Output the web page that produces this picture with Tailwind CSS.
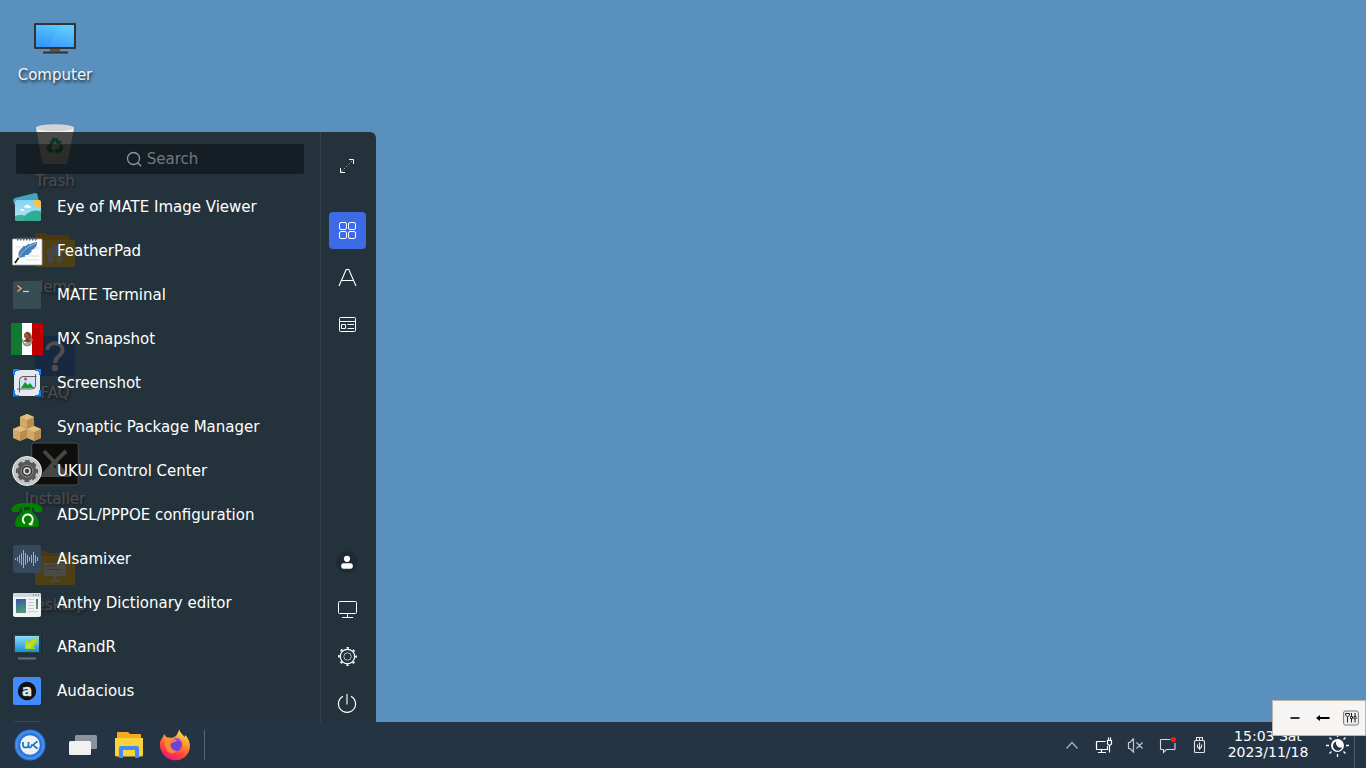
<!DOCTYPE html>
<html lang="en">
<head>
<meta charset="utf-8">
<title>Desktop</title>
<script src="https://cdn.jsdelivr.net/npm/@tailwindcss/browser@4"></script>
</head>
<body class="relative flex h-[768px] w-[1366px] flex-col overflow-hidden bg-[#5990bd] font-['DejaVu_Sans',sans-serif] text-[15px] text-white">

<!-- Desktop icons -->
<div class="absolute left-0 top-0 flex w-[110px] flex-col text-center text-[#f4f4f4] [text-shadow:1px_2px_3px_rgba(0,0,0,.75)]">
  <div class="flex h-[106px] flex-col items-center pt-[14px]"><svg class="h-12 w-12 shrink-0" viewBox="0 0 48 48"><defs><linearGradient id="scr" x1=".7" y1="0" x2=".3" y2="1"><stop stop-color="#58ccfd"/><stop offset="1" stop-color="#3496f7"/></linearGradient></defs><rect x="3" y="9" width="42" height="26" rx="1.2" fill="#333"/><path d="M5 11h38v22H5z" fill="url(#scr)"/><path d="M30 11h13v22H17z" fill="#fff" opacity=".05"/><path d="M19 35h10v2.500H19z" fill="#555"/><path d="M12 37.500h25v2H12z" fill="#333"/></svg><span class="mt-[3px] leading-5">Computer</span></div>
  <div class="flex h-[106px] flex-col items-center pt-[14px]"><svg class="h-12 w-12 shrink-0" viewBox="0 0 48 48"><path d="M5 7.500l6 33.500q.5 3 3 3h20q2.500 0 3-3l6-33.500z" fill="#f0f0f0"/><ellipse cx="24" cy="7.700" rx="19" ry="3.500" fill="#d2d4d6"/><g fill="none" stroke="#00a05a" stroke-width="3.600"><path d="M20 24l2.500-4.200h3l2 3.400"/><path d="M29 25l1.500 3-1.500 2.800h-4"/><path d="M22 30.800h-3L17.500 28l1.500-3"/></g><path d="M25.500 23.800l4.500.2 1-4zM26 28l-3 2.800 3 2.700zM16 25.500l4.300-1.800.8 4.300z" fill="#00a05a"/></svg><span class="mt-[3px] leading-5">Trash</span></div>
  <div class="flex h-[106px] flex-col items-center pt-[14px]"><svg class="h-12 w-12 shrink-0" viewBox="0 0 48 48"><path d="M4 9q0-2 2-2h9l3 2h18q2 0 2 2v8H4z" fill="#ff9f0a"/><rect x="4" y="14" width="40" height="27" rx="2" fill="#ffc824"/><path d="M24 18l-10 9h3v10h5v-7h4v7h5V27h3z" fill="#e6e0e8"/></svg><span class="mt-[3px] leading-5">demo</span></div>
  <div class="flex h-[106px] flex-col items-center pt-[14px]"><svg class="h-12 w-12 shrink-0" viewBox="0 0 48 48"><rect x="4" y="4" width="40" height="40" rx="3" fill="#2a68d0"/><path d="M16.500 18c0-9 15-9 15 0 0 6-7.500 6-7.500 13" fill="none" stroke="#fff" stroke-width="4"/><circle cx="24" cy="36" r="3.200" fill="#fff"/></svg><span class="mt-[3px] leading-5">FAQ</span></div>
  <div class="flex h-[106px] flex-col items-center pt-[14px]"><svg class="h-12 w-12 shrink-0" viewBox="0 0 48 48"><rect x=".7" y="5" width="46.600" height="42" rx="2.500" fill="#000" stroke="#eee"/><path d="M8 39l12-14 4 5 4-4 12 13z" fill="#ddd"/><path d="M13 13l17 18M35 13L21 27" stroke="#ddd" stroke-width="4"/></svg><span class="mt-[3px] leading-5">Installer</span></div>
  <div class="flex h-[106px] flex-col items-center pt-[14px]"><svg class="h-12 w-12 shrink-0" viewBox="0 0 48 48"><path d="M4 9q0-2 2-2h9l3 2h18q2 0 2 2v8H4z" fill="#ff9f0a"/><rect x="4" y="12" width="40" height="29" rx="2" fill="#ffc824"/><path d="M13 19h22v13H13z" fill="#f0f0f0"/><path d="M24 32v4M19 37h10" stroke="#f0f0f0" stroke-width="1.500"/><path d="M15 22h10M15 25.500h14" stroke="#a98"/></svg><span class="mt-[3px] leading-5">Desktop</span></div>
</div>

<!-- Start menu -->
<main class="relative flex h-[722px] shrink-0 items-end">
<section class="flex h-[590px] w-[376px] overflow-hidden rounded-tr-md bg-[#131312]/75">
  <div class="w-[321px] shrink-0 border-r border-[#35424c]">
    <div class="ml-4 mt-3 flex h-[30px] w-[288px] items-center justify-center gap-1 rounded-[2px] bg-black/40 pl-[3px] text-[#73797e]">
      <svg class="h-[18px] w-[18px]" viewBox="0 0 18 18" fill="none" stroke="#91969a" stroke-width="1.300"><circle cx="8.500" cy="8.500" r="6"/><path d="M13 13l3.200 3.200"/></svg><span class="leading-5">Search</span>
    </div>
    <ul class="mt-[11px] [&>li]:flex [&>li]:h-11 [&>li]:items-center [&>li]:gap-[14px] [&>li]:whitespace-nowrap [&>li]:pl-[11px] [&_svg]:h-8 [&_svg]:w-8 [&_svg]:shrink-0">
      <li><svg viewBox="0 0 32 32"><path d="M2 9.500q-.2-2 2-2.500l19-4.800q3-.7 3.500 1.600l4 18H7z" fill="#45a3c0"/><defs><linearGradient id="sky" x2="0" y2="1"><stop stop-color="#83d4f3"/><stop offset="1" stop-color="#b7e5f2"/></linearGradient><clipPath id="card"><rect x="4" y="9" width="26" height="21" rx="2.500"/></clipPath></defs><g clip-path="url(#card)"><path d="M4 9h26v21H4z" fill="url(#sky)"/><circle cx="28.500" cy="10.500" r="6" fill="#f7c34b"/><ellipse cx="10" cy="30" rx="11" ry="6" fill="#3ab095"/><ellipse cx="25" cy="29" rx="12" ry="9.500" fill="#2fad91"/></g><path d="M12.500 16q1-1.500 2-1 2-3 4 0 2 0 1.500 1.500-3 1.500-7.500-.5zM9 19q1-1.500 2.500-1 2 0 2 1.500-2 1-4.500-.5z" fill="#fff"/></svg><span>Eye of MATE Image Viewer</span></li>
      <li><svg viewBox="0 0 32 32"><rect x="1.500" y="4" width="29.500" height="26" rx=".7" fill="#fcfcfc" stroke="#aaa" stroke-width=".8"/><path d="M7.500 2l-1 3.500M10.500 2l-1 3.500M13.500 2l-1 3.500M16.500 2l-1 3.500M19.500 2l-1 3.500M22.500 2l-1 3.500M25.500 2l-1 3.500" stroke="#555" stroke-width="1.200"/><path d="M5 12h6M17 21h11M15 25h13M25 13h3" stroke="#ddd"/><path d="M26 7q1 3-3 7l-3 1 1 1-4 4-3 0 .5 1.500-6.500 1.500q-2-6 3-10l2-2.500 1 1 4-3 .5 1 3-1.500z" fill="#4380bb"/><path d="M25 8Q12 13 7 24" fill="none" stroke="#b8d2ea" stroke-width=".7"/><path d="M7.500 23L4 28" stroke="#111" stroke-width="1.700"/></svg><span>FeatherPad</span></li>
      <li><svg viewBox="0 0 32 32"><rect x="2" y="2" width="28" height="28" rx="2.500" fill="#384c54"/><path d="M6.500 6.500L10 9.500l-3.500 3" fill="none" stroke="#f79a5e" stroke-width="1.600"/><path d="M12 12.500h6" stroke="#c9e488" stroke-width="1.200"/></svg><span>MATE Terminal</span></li>
      <li><svg viewBox="0 0 32 32"><path d="M0 0h11v32H0z" fill="#117a31"/><path d="M11 0h10v32H11z" fill="#fff"/><path d="M21 0h11v32H21z" fill="#c00000"/><path d="M11.500 16c0 9 9 9 9.500 0" fill="none" stroke="#7d9c76" stroke-width="1.500"/><path d="M13 11q2-3 5-2 3 2 3 6-1 4-3 4.500-3 1-5-1.500l2-2-2-2z" fill="#97593c"/><path d="M16 9.500l3 4-3 3 2 3M12.500 18.500l4-2 3 2.500" fill="none" stroke="#5b3322" stroke-width="1"/><path d="M13 21h6" stroke="#5a9a90" stroke-width="1.400"/></svg><span>MX Snapshot</span></li>
      <li><svg viewBox="0 0 32 32"><rect x="3" y="3" width="26" height="26" rx="2" fill="#e5e8ec"/><path d="M2 2h6v2H5v1H4v3H2zM24 2h6v6h-2V5h-1V4h-3zM30 29.500h-6V28h3v-1h1v-4h2zM2 29.500V23h2v4h1v1h3v1.500z" fill="#0a84ff"/><rect x="8.500" y="9" width="15.500" height="13" rx="3" fill="#cfe2fc"/><path d="M24.500 7v12q0 3-4 3H6M25.500 9.500H12q-3.500 0-3.500 4v12" fill="none" stroke="#555f66"/><path d="M10 21l4-6 3 3 2-2 4 5z" fill="#169b22"/><path d="M14.500 10.500v3M13 12h3" stroke="#dc4932" stroke-width="1.600"/></svg><span>Screenshot</span></li>
      <li><svg viewBox="0 0 32 32"><path d="M16 3l7 3v9l-7 3-7-3V6z" fill="#d3a767"/><path d="M16 9l7-3v9l-7 3z" fill="#b98d50"/><path d="M16 3l7 3-7 3-7-3z" fill="#e2bd82"/><path d="M9 15l7 3v9l-7 3-7-3v-9z" fill="#d3a767"/><path d="M9 21l7-3v9l-7 3z" fill="#b98d50"/><path d="M9 15l7 3-7 3-7-3z" fill="#e2bd82"/><path d="M23 15l7 3v9l-7 3-7-3v-9z" fill="#d3a767"/><path d="M23 21l7-3v9l-7 3z" fill="#b98d50"/><path d="M23 15l7 3-7 3-7-3z" fill="#e2bd82"/></svg><span>Synaptic Package Manager</span></li>
      <li><svg viewBox="0 0 32 32"><circle cx="16" cy="16" r="14.500" fill="#c3c5c6" stroke="#f0f0f0" stroke-width="1"/><circle cx="16" cy="16" r="9.400" fill="#58595a"/><circle cx="16" cy="16" r="9.800" fill="none" stroke="#58595a" stroke-width="2.600" stroke-dasharray="4.700 3" stroke-dashoffset="2.350"/><circle cx="16" cy="16" r="5.800" fill="#353535" stroke="#999" stroke-width=".8"/><circle cx="16" cy="16" r="3" fill="#444" stroke="#ddd" stroke-width="1.500"/></svg><span>UKUI Control Center</span></li>
      <li><svg viewBox="0 0 32 32"><path d="M.5 11C0 6 7 4 16 4s16 2 15.500 7q-.2 2.500-2 2h-5q-2-.5-1.500-4-7-2-14 0 .5 3.500-1.500 4h-5q-1.800.5-2-2z" fill="#008200"/><path d="M11 8h2v3h6V8h2v5q6 4 7 11 0 4-2 4H6q-2 0-2-4 1-7 7-11z" fill="#008200"/><path d="M13.800 24.500a5 5 0 1 1 4.200.8h3.500" fill="none" stroke="#f4fff4" stroke-width="2"/></svg><span>ADSL/PPPOE configuration</span></li>
      <li><svg viewBox="0 0 32 32"><rect x="2" y="2" width="28" height="28" rx="2.500" fill="#34495e"/><path d="M4.500 15v2M6.500 14v4M8.500 12v8M10.500 10v12M12.500 7v18M14.500 10v12M16.500 12v8M18.500 14v4M20.500 12v8M22.500 9v14M24.500 12v8M26.500 14v4" stroke="#5cc8f0" stroke-width="1"/></svg><span>Alsamixer</span></li>
      <li><svg viewBox="0 0 32 32"><defs><linearGradient id="pic" x1=".2" x2=".7" y2="1"><stop stop-color="#385da5"/><stop offset="1" stop-color="#5aaa66"/></linearGradient></defs><rect x="2" y="6" width="28" height="24" rx="2" fill="#f1f2f2"/><path d="M4 6h24q2 0 2 2v2H2V8q0-2 2-2z" fill="#d0d8df"/><path d="M22 8h1M24.500 8h1M27 8h1" stroke="#476179"/><path d="M5 12h10v14H5zM25 12h2v10h-2z" fill="url(#pic)"/><path d="M17 12.500h6M17 15.500h6M17 18.500h6M17 21.500h6M17 24.500h10" stroke="#c9ced0"/></svg><span>Anthy Dictionary editor</span></li>
      <li><svg viewBox="0 0 32 32"><defs><linearGradient id="rand" x2="0" y2="1"><stop stop-color="#8cdcff"/><stop offset="1" stop-color="#188dd0"/></linearGradient></defs><rect x="1.500" y="2.500" width="29" height="20.500" rx="1" fill="#2b3c45" stroke="#1d292f"/><path d="M4 5h24v16H4z" fill="url(#rand)"/><path d="M26.500 6v5l-4 4.500 2 2.500H14V8l3.500 2.500z" fill="#a8d51e"/><path d="M26.500 6l-9 7-2-2v6h5.500l-1.500-1.500z" fill="#bfe02c"/><path d="M7 27.500h18" stroke="#63727a" stroke-width="2"/></svg><span>ARandR</span></li>
      <li><svg viewBox="0 0 32 32"><rect x="2" y="2" width="28" height="28" rx="2.500" fill="#448aff"/><circle cx="16" cy="16" r="9.200" fill="#111"/><text x="16" y="21" text-anchor="middle" font-family="DejaVu Sans" font-weight="bold" font-size="15" fill="#dfe6e6" stroke="#dfe6e6" stroke-width=".4">a</text></svg><span>Audacious</span></li>
      <li><svg viewBox="0 0 32 32"><rect x="2" y="2" width="28" height="28" rx="2" fill="#3e4649"/></svg></li>
    </ul>
  </div>
  <nav class="flex w-[55px] flex-col items-start pl-2 pt-[15px] [&>div]:flex [&>div]:h-[37px] [&>div]:w-[37px] [&>div]:shrink-0 [&>div]:pl-[7px] [&>div]:pt-[7px] [&_svg]:h-6 [&_svg]:w-6">
    <div><svg viewBox="0 0 24 24" fill="none" stroke="#fff"><path d="M13 5.500h4.500V10M4.500 14v4.500H9"/><path d="M5.500 17.500l11-11" stroke-dasharray="1.200 2.200" stroke="#bbc1c5"/></svg></div>
    <div class="mt-7 rounded-[4px] bg-[#3d6be5]"><svg viewBox="0 0 24 24" fill="none" stroke="#fff"><rect x="3.500" y="3.500" width="7" height="7" rx="1.500"/><rect x="12.500" y="3.500" width="7" height="7" rx="1.500"/><rect x="3.500" y="12.500" width="7" height="7" rx="1.500"/><rect x="12.500" y="12.500" width="7" height="7" rx="1.500"/></svg></div>
    <div class="mt-[10px]"><svg viewBox="0 0 24 24" fill="none" stroke="#fff" stroke-width="1.100"><path d="M3 20L10.200 3.500h2.600L20 20M6 14.500h11"/></svg></div>
    <div class="mt-[10px]"><svg viewBox="0 0 24 24" fill="none" stroke="#fff"><rect x="3.500" y="4.500" width="16" height="14" rx="1"/><path d="M3.500 8.500h16M5.500 11.500h4v4h-4zM11.500 11.500h6.500M11.500 15.500h6.500"/></svg></div>
    <div class="mt-[201px]"><svg viewBox="0 0 24 24"><circle cx="11" cy="11" r="10.800" fill="#1e2a33"/><circle cx="11" cy="7.800" r="3.100" fill="#fff"/><rect x="5.200" y="12.200" width="11.600" height="5.500" rx="2.300" fill="#fff"/></svg></div>
    <div class="mt-[10px]"><svg viewBox="0 0 24 24" fill="none" stroke="#fff"><rect x="2.500" y="3.500" width="18" height="12" rx="1"/><path d="M11.500 15.500v4M6 19.500h11"/></svg></div>
    <div class="mt-[10px]"><svg viewBox="0 0 24 24" fill="none" stroke="#fff"><circle cx="11.500" cy="11.500" r="7.200" stroke-width="1.200"/><circle cx="11.500" cy="11.500" r="8.600" stroke-width="1.700" stroke-dasharray="2.400 4.355" stroke-dashoffset="1.200"/><circle cx="11.500" cy="11.500" r="3.700" stroke="#b5bdc2"/></svg></div>
    <div class="mt-[10px]"><svg viewBox="0 0 24 24" fill="none" stroke="#fff" stroke-width="1.100"><path d="M7 4.200a8.600 8.600 0 1 0 8 0M11 2v10.500"/></svg></div>
  </nav>
</section>
</main>

<!-- Taskbar -->
<footer class="relative flex h-[46px] shrink-0 items-center justify-between bg-[#253445]">
  <div class="flex h-full items-center pl-[14px]">
    <svg class="h-8 w-8" viewBox="0 0 32 32"><circle cx="16" cy="16" r="15.500" fill="#2f76da"/><circle cx="16" cy="16" r="13.300" fill="none" stroke="#4794ef" stroke-width="1.700"/><circle cx="16" cy="16" r="9.800" fill="#eef2f5"/><path d="M9 13v3q0 2.500 2.500 2.500h.5q2.500 0 2.500-2.500v-3M14.500 16.500q0 2 1.500 2 1 0 2-2.500M17 16h2.500M23.700 12.800h-1L19 16l3.700 3.200h1" fill="none" stroke="#1976bd" stroke-width="1.700"/></svg>
    <svg class="ml-[23px] h-[22px] w-7" viewBox="0 0 28 22"><rect x="6" y="1" width="22" height="14" rx="1.500" fill="#8b949e"/><rect y="7" width="22" height="14" rx="1.500" fill="#f1f1f1"/></svg>
    <svg class="ml-[18px] h-7 w-7" viewBox="0 0 28 28"><path d="M2 2q0-1 1-1h10l2 2h10q1 0 1 1v6H2z" fill="#f9a91e"/><path d="M0 7h28v17q0 1.500-1.500 1.500h-25Q0 25.500 0 24z" fill="#f8d33c"/><path d="M4 27V17q0-2 2-2h16q2 0 2 2v10h-4v-8H8v8z" fill="#448aff"/></svg>
    <svg class="ml-4 h-8 w-8" viewBox="0 0 32 32"><defs><linearGradient id="fox" x1=".8" x2=".3" y2="1"><stop stop-color="#fff14a"/><stop offset=".4" stop-color="#ff922b"/><stop offset=".75" stop-color="#ff3c42"/><stop offset="1" stop-color="#e31587"/></linearGradient></defs><path d="M20.500 0c-.5 3 3 5 5 8l1-2c5 6 6 13 2 19-6 9-20 8-25-1C-1 17 1 11 4 8l1-3q1 1 3 4 4-1 5 0l4-2q2-3 3.500-7z" fill="url(#fox)"/><circle cx="16.500" cy="16" r="6.500" fill="#7540d4"/><path d="M15 9q6-1 8 5-3-3-6-2" fill="#a04be8"/><path d="M4 8q4-1 8 2 3-1 6 2l-5 2q-2 1-1 4 2 4 6 4-4 4-9 1-4-3-3-10z" fill="#ff962c" opacity=".8"/></svg>
    <div class="ml-[13px] h-[30px] w-px bg-[#5a6673]"></div>
  </div>
  <div class="flex h-full items-center [&>svg]:shrink-0">
    <svg class="h-6 w-6" viewBox="0 0 24 24" fill="none" stroke="#a9b0b8" stroke-width="1.200"><path d="M6.500 15.500l5.500-6 5.500 6"/></svg>
    <svg class="ml-2 h-6 w-6" viewBox="0 0 24 24" fill="none" stroke="#fff" stroke-width="1.200"><path d="M13.500 8.500H5q-.5 0-.5.500v7q0 .5.500.5h10.500V13M9.500 16.500v2.500M6 19.500h8M15.500 7.500h4V11l-1 1h-2l-1-1zM16.500 7.500v-3M18.500 7.500v-3M17.500 12v7.500"/></svg>
    <svg class="ml-2 h-6 w-6" viewBox="0 0 24 24" fill="none" stroke="#c2c8ce" stroke-width="1.200"><path d="M9.500 5.500v13.500L6 15.500H4.500v-6H6L9.500 5.500M12.500 9.500l6 6M18.500 9.500l-6 6"/></svg>
    <svg class="ml-2 h-6 w-6" viewBox="0 0 24 24" fill="none" stroke="#d4d8dc" stroke-width="1.100"><path d="M14.500 6.500H5q-.5 0-.5.500v9q0 .5.500.5h2.500v3l3-3h8q.5 0 .5-.5V10"/><circle cx="17.500" cy="6.500" r="2.600" fill="#ff1a00" stroke="none"/></svg>
    <svg class="ml-2 h-6 w-6" viewBox="0 0 24 24" fill="none" stroke="#e0e3e6" stroke-width="1.100"><rect x="6.500" y="7.500" width="10" height="12" rx="1"/><path d="M8.500 7.500v-3h6v3M11.500 4.500v3M11.500 9.500v7.500M9.500 11.500V14l2 2 2-2v-2.500"/></svg>
    <div class="-mt-[2px] ml-[11px] w-[90px] whitespace-nowrap text-center text-[14px] leading-4"><div>15:03 Sat</div><div>2023/11/18</div></div>
    <svg class="ml-[13px] h-6 w-6" viewBox="0 0 24 24"><circle cx="11.500" cy="12.500" r="6.500" fill="#fff"/><path d="M10.200 8.500a4.700 4.700 0 1 0 6 5.700 4.500 4.500 0 0 1-6-5.700z" fill="#253445"/><path d="M11.500 1v3M11.500 21v3M0 12.500h3M20 12.500h3M3.500 4.500L5.500 6.500M17.500 18.500l2 2M3.500 20.500l2-2M17.500 6.500l2-2" stroke="#fff" stroke-width="1.300"/></svg>
    <div class="ml-1 h-full w-3 border-l border-[#4e5b69]"></div>
  </div>
</footer>

<!-- Floating input-method toolbar -->
<div class="absolute left-[1272px] top-[700px] flex h-9 w-[94px] items-center border border-[#bcb5ae] bg-[#f6f5f4] pl-[10px]">
  <svg class="h-6 w-6" viewBox="0 0 24 24"><path d="M7.500 12h9" stroke="#27343d" stroke-width="2"/></svg>
  <svg class="ml-[5px] h-6 w-6" viewBox="0 0 24 24"><path d="M4 12l4-3v2h9.500v2H8v2z" fill="#000"/></svg>
  <svg class="ml-[7px] h-4 w-4" viewBox="0 0 16 16" fill="none"><rect x=".6" y="1" width="14.800" height="14" rx="1.800" fill="#eee" stroke="#777"/><path d="M4.500 7v5.500M8.500 3v3M8.500 9v3.500M12 3v3.500M12 9.500v3" stroke="#222"/><path d="M2.500 3.500h4V5l-2 2-2-2zM7.500 6.500h2v2h-2zM11 6.500h2v2.500h-2z" stroke="#222"/></svg>
</div>
</body>
</html>
